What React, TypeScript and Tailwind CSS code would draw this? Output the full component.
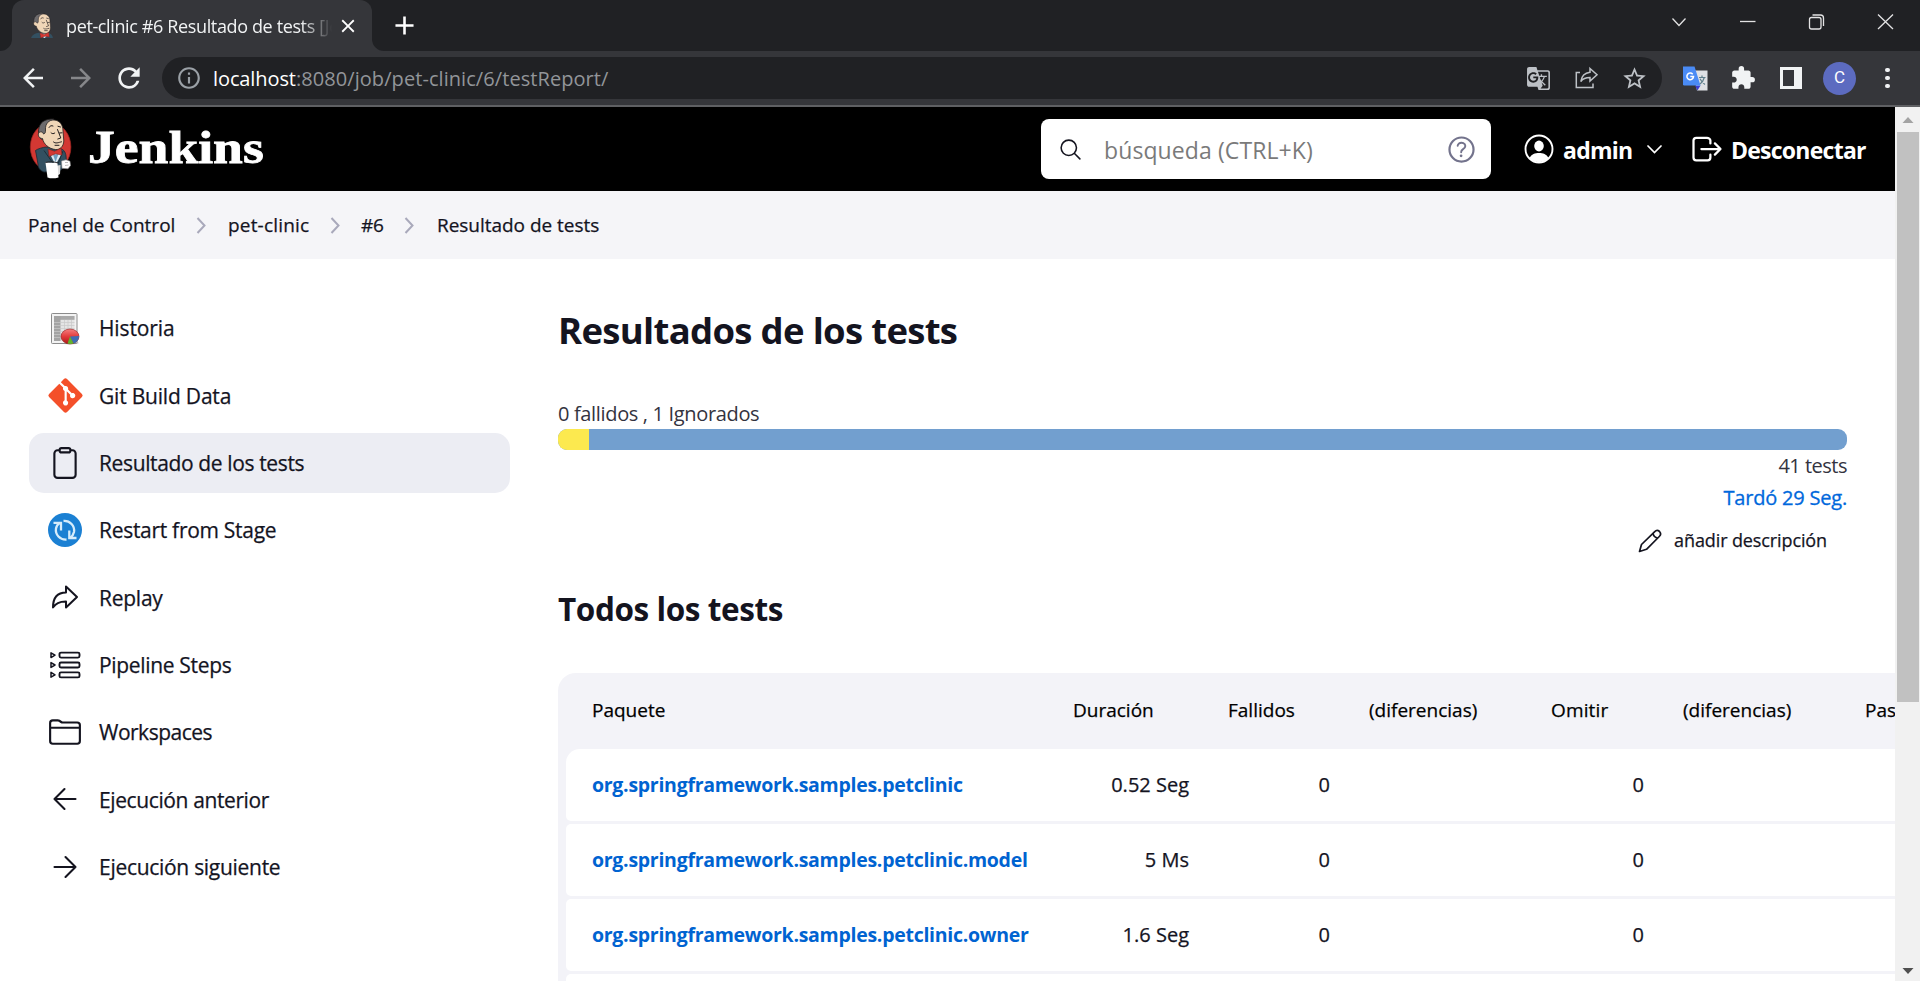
import type { ReactNode } from "react";
import {
  MdAdd,
  MdArrowBack,
  MdArrowForward,
  MdClose,
  MdExtension,
  MdGTranslate,
  MdInfoOutline,
  MdRefresh,
  MdStarBorder,
} from "react-icons/md";
import {
  IoArrowRedoOutline,
  IoClipboardOutline,
  IoFolderOutline,
  IoHelpCircleOutline,
  IoLogOutOutline,
  IoSearchOutline,
} from "react-icons/io5";
import { FaGitAlt } from "react-icons/fa";

function ButlerHead() {
  return (
    <g>
      <path d="M41 139 C37 134 38 125 43 121.500 C46 119.500 50 118.800 54 119 L50 130 L46 140 Z" fill="#6d6b6d" stroke="#231f20" strokeWidth="0.8" />
      <path
        d="M45.500 130 C45 123.500 49 119.800 54 120 C60 120.500 63 125 63 131 L63.800 141 C63.500 146.500 60 150 55.500 149.500 C49 149 43.500 144 42.500 138.500 C39.500 138.500 37.800 136 38.500 133.500 C39.500 131 43 131.500 43.500 134 C45.500 133.500 45.500 132 45.500 130 Z"
        fill="#f0d6b7"
        stroke="#231f20"
        strokeWidth="0.8"
      />
      <path
        d="M49 127.500 C50 125.600 51.500 125.300 53 126 M58 126.300 L60.500 127 M51 132.800 C52 134 53.800 134 54.800 133 M59.500 133 L62 132.800 M57.500 129.500 L60.800 138 L57.800 139 M53.500 142 C55.500 144 58.500 142.500 61.500 141.800 M55 145.300 L59 145.300"
        fill="none"
        stroke="#231f20"
        strokeWidth="1"
        strokeLinecap="round"
      />
    </g>
  );
}

function BowTie() {
  return (
    <path
      d="M48 149 L54.500 151.200 L61 148.200 L62 155 L55.500 153.800 L49 156.500 Z"
      fill="#d33833"
      stroke="#81201c"
      strokeWidth="0.6"
    />
  );
}

function JenkinsLogo() {
  return (
    <svg className="h-[62px] w-[44px] shrink-0" viewBox="29 118 44 62">
      <ellipse cx="50.600" cy="147" rx="20.300" ry="24" fill="#d33833" stroke="#9d2420" strokeWidth="0.7" />
      <path
        d="M35.500 150.500 C38 148.500 43 147.500 46 147 L60 148.500 C64 149.500 65.500 152 66 156 L66.500 163 L61 170 L44 172 C40 170.500 38 168 38 164 Z"
        fill="#335061"
        stroke="#1b2a33"
        strokeWidth="0.8"
      />
      <path d="M50 154 L55.500 165 L61.500 154 L55 152.500 Z" fill="#dce9f2" />
      <path d="M53 154.500 L55.500 162 L58.500 154 Z" fill="#6f9fc0" />
      <path d="M44 150.500 L53.500 164 M63 151 L58 164" stroke="#1b2a33" strokeWidth="0.9" fill="none" />
      <ButlerHead />
      <BowTie />
      <path d="M61.500 161 L66 159.800 L70 161.200 L70.500 165.500 L68 168.800 L62 168.300 Z" fill="#fff" stroke="#8d8d8d" strokeWidth="0.6" />
      <path d="M65 162.500 L68 162.500 M65 165.500 L68.500 165" stroke="#8d8d8d" strokeWidth="0.6" />
      <path d="M55 166 L60.500 165 L60 174 L56.500 176 Z" fill="#d9d9d9" />
      <path d="M45.500 162.500 L57.500 163 L58.500 177.500 C54 178.800 50 178.500 47.500 177.500 Z" fill="#fff" />
      <path d="M45.500 162.500 C49 161.500 54 161.500 58 163" stroke="#231f20" strokeWidth="0.9" fill="none" />
    </svg>
  );
}

function Favicon() {
  return (
    <svg className="h-[25px] w-[22px] shrink-0" viewBox="34.500 118.500 33 38" preserveAspectRatio="none">
      <path d="M34.500 157 C36 151 41 149.500 46 148.500 L60 148.500 C64 149.500 67 152.500 67.500 157 Z" fill="#335061" />
      <path d="M48 150 L54.500 157 L62 150 Z" fill="#dce9f2" />
      <ButlerHead />
      <BowTie />
    </svg>
  );
}

function WindowControls() {
  return (
    <svg className="h-[18px] w-[222px]" viewBox="1672 13 222 18" fill="none" stroke="#e3e3e4" strokeWidth="1.300">
      <path d="M1672.500 18.500 L1679 25.500 L1685.500 18.500" />
      <path d="M1740 21.500 H1755.500" />
      <rect x="1809.500" y="17.500" width="11.500" height="11.500" rx="2" />
      <path d="M1812.500 15 H1820.500 Q1823.500 15 1823.500 18 V26" />
      <path d="M1878 14.500 L1893 29 M1893 14.500 L1878 29" />
    </svg>
  );
}

function ShareIcon() {
  return (
    <svg className="h-[24px] w-[24px]" viewBox="0 0 24 24" fill="none" stroke="#bdc1c6" strokeWidth="1.500">
      <path d="M5 6.500 H1.300 V21.500 H18 V17.500" />
      <path d="M15 2.500 L22 8.800 L15 15 V11.600 C11 11.600 8 12.500 5.800 15.500 C6.500 10.500 9.500 7 15 6.300 Z" />
    </svg>
  );
}

function GoogleTranslateIcon() {
  return (
    <svg className="h-[25px] w-[25px]" viewBox="0 0 25 25">
      <path d="M10 4.500 H24.500 V24.500 H14 Z" fill="#dfe1e5" />
      <path d="M12 19.500 H17.500 L14.500 24.500 Z" fill="#3b3fd1" />
      <path d="M0 0.500 H11.500 L17.500 19.500 H1.200 Q0 19.500 0 18.300 Z" fill="#4a8bf5" />
      <path d="M16 11.500 H22.500 M19 9.500 V11.500 M21.300 11.500 C20.500 14.500 18.800 16.800 17 18 M17 12.800 C18.200 15.300 20 17.300 22 18.500" fill="none" stroke="#5f7f8c" strokeWidth="1.200" />
      <path d="M9.700 8.200 A3.300 3.300 0 1 0 10.500 10.600 H7.300" fill="none" stroke="#fff" strokeWidth="1.500" />
    </svg>
  );
}

function SidePanelIcon() {
  return (
    <svg className="h-[22px] w-[22px]" viewBox="0 0 22 22">
      <rect x="1.500" y="1.500" width="19" height="19" fill="none" stroke="#f1f3f4" strokeWidth="3" />
      <rect x="14" y="2" width="6" height="18" fill="#f1f3f4" />
    </svg>
  );
}

function ChromeTabs() {
  return (
    <div className="flex h-[51px] items-start bg-[#202124]">
      <div className="flex h-[51px] w-[12px] items-end bg-[#202124]">
        <svg className="h-[12px] w-[12px]" viewBox="0 0 12 12">
          <path d="M12 0 A12 12 0 0 1 0 12 H12 Z" fill="#35363a" />
        </svg>
      </div>
      <div className="flex h-[51px] w-[360px] items-center rounded-t-[12px] bg-[#35363a] pl-[19px]">
        <Favicon />
        <div className="ml-[13px] h-[26px] w-[266px] overflow-hidden whitespace-nowrap text-[18px] leading-[26px] tracking-[-0.37px] text-[#f1f3f4] [mask-image:linear-gradient(to_right,#000_235px,transparent_266px)]">
          pet-clinic #6 Resultado de tests [Jenkins]
        </div>
        <MdClose className="ml-[5px] text-[22px] text-white" />
      </div>
      <div className="flex h-[51px] w-[12px] items-end">
        <svg className="h-[12px] w-[12px]" viewBox="0 0 12 12">
          <path d="M0 0 A12 12 0 0 0 12 12 H0 Z" fill="#35363a" />
        </svg>
      </div>
      <MdAdd className="mt-[10px] ml-[5px] text-[31px] text-white" />
      <div className="mt-[13px] mr-[26px] ml-auto">
        <WindowControls />
      </div>
    </div>
  );
}

function ChromeToolbar() {
  return (
    <div className="flex h-[56px] items-center border-b-2 border-[#5f6063] bg-[#35363a]">
      <div className="flex w-[162px] items-center pl-[18px]">
        <MdArrowBack className="text-[30px] text-[#f1f3f4]" />
        <MdArrowForward className="ml-[18px] text-[30px] text-[#86878a]" />
        <MdRefresh className="ml-[17px] text-[32px] text-[#f1f3f4]" />
      </div>
      <div className="flex h-[42px] w-[1500px] items-center rounded-full bg-[#202124] pl-[14px]">
        <MdInfoOutline className="text-[26px] text-[#9aa0a6]" />
        <div className="mt-px ml-[11px] text-[20px] leading-[30px]">
          <span className="tracking-[-0.1px] text-white">localhost</span>
          <span className="tracking-[0.07px] text-[#929599]">:8080/job/pet-clinic/6/testReport/</span>
        </div>
        <div className="mr-[14px] ml-auto flex items-center">
          <MdGTranslate className="text-[25px] text-[#bdc1c6]" />
          <div className="ml-[24px]">
            <ShareIcon />
          </div>
          <MdStarBorder className="ml-[22px] text-[27px] text-[#bdc1c6]" />
        </div>
      </div>
      <div className="flex items-center pl-[21px]">
        <GoogleTranslateIcon />
        <MdExtension className="ml-[22px] text-[26px] text-[#f1f3f4]" />
        <div className="ml-[24px]">
          <SidePanelIcon />
        </div>
        <div className="ml-[21px] flex size-[33px] items-center justify-center rounded-full bg-[#5c6bc0] font-[Roboto] text-[17px] text-white">
          C
        </div>
        <div className="ml-[29px] flex flex-col gap-[3.5px]">
          <span className="size-[4.5px] rounded-full bg-[#f1f3f4]" />
          <span className="size-[4.5px] rounded-full bg-[#f1f3f4]" />
          <span className="size-[4.5px] rounded-full bg-[#f1f3f4]" />
        </div>
      </div>
    </div>
  );
}

function Header() {
  return (
    <header className="flex h-[84px] shrink-0 items-center bg-black pr-[29px] pl-[29px] text-white">
      <JenkinsLogo />
      <div className="ml-[15px] h-[62px] origin-left scale-x-[1.165] font-['Liberation_Serif'] text-[46px] leading-[60px] font-bold [-webkit-text-stroke:0.8px]">
        Jenkins
      </div>
      <div className="ml-auto flex h-[60px] w-[450px] items-center rounded-[8px] bg-white pr-[12px] pl-[17px]">
        <IoSearchOutline className="text-[25px] text-[#14141f]" />
        <span className="mt-px ml-[21px] text-[23px] leading-[32px] tracking-[0.1px] text-[#7a7a7a]">
          búsqueda (CTRL+K)
        </span>
        <IoHelpCircleOutline className="ml-auto text-[35px] text-[#73738c]" />
      </div>
      <svg className="ml-[33px] size-[30px]" viewBox="0 0 30 30">
        <circle cx="15" cy="15" r="13.500" fill="none" stroke="#fff" strokeWidth="1.900" />
        <ellipse cx="15" cy="12" rx="4.800" ry="5.400" fill="#fff" />
        <path d="M5.500 24 C7.500 20 11 19 15 19 C19 19 22.500 20 24.500 24 A13 13 0 0 1 5.500 24 Z" fill="#fff" />
      </svg>
      <span className="mt-px ml-[9px] w-[70px] text-[23px] leading-[32px] font-bold tracking-[-0.75px]">admin</span>
      <svg className="ml-[14px] h-[9px] w-[15px]" viewBox="0 0 15 9" fill="none" stroke="#fff" strokeWidth="1.700">
        <path d="M1 1 L7.500 7.500 L14 1" strokeLinecap="round" />
      </svg>
      <IoLogOutOutline className="ml-[27px] text-[36px]" />
      <span className="mt-px ml-[6px] w-[135px] text-[23px] leading-[32px] font-bold tracking-[-0.75px]">
        Desconectar
      </span>
    </header>
  );
}

function Crumb() {
  return (
    <svg className="h-[17px] w-[10px]" viewBox="0 0 10 17" fill="none" stroke="#a9a9bb" strokeWidth="2">
      <path d="M1.500 1 L8.500 8.500 L1.500 16" />
    </svg>
  );
}

function Breadcrumbs() {
  return (
    <div className="flex h-[68px] shrink-0 items-center bg-[#f5f5f8] pl-[28px] text-[19px] font-medium text-[#14141f] [-webkit-text-stroke:0.25px]">
      <span className="w-[168px] tracking-[0.02px]">Panel de Control</span>
      <Crumb />
      <span className="ml-[22px] w-[102px] tracking-[0.18px]">pet-clinic</span>
      <Crumb />
      <span className="ml-[21px] w-[43px] tracking-[-0.27px]">#6</span>
      <Crumb />
      <span className="ml-[23px] tracking-[-0.03px]">Resultado de tests</span>
    </div>
  );
}

function ReportIcon() {
  return (
    <svg className="h-[33px] w-[30px]" viewBox="0 0 30 33">
      <defs>
        <linearGradient id="pie" x1="0" y1="0" x2="0" y2="1">
          <stop offset="0" stopColor="#f58080" />
          <stop offset="0.500" stopColor="#e33b3b" />
          <stop offset="1" stopColor="#a81818" />
        </linearGradient>
      </defs>
      <ellipse cx="20" cy="31" rx="9" ry="1.500" fill="#d5d5d5" />
      <rect x="1.500" y="1.500" width="25.500" height="30" rx="0.800" fill="#f3f3f3" stroke="#8c8c8c" />
      <rect x="4" y="4" width="20.500" height="25" fill="#e4e4e4" />
      <rect x="4" y="4" width="20.500" height="3.800" fill="#a9a9a9" />
      <rect x="4" y="4" width="6.500" height="25" fill="#a3a3a3" />
      <path d="M4 10.500 H24.500 M4 13.500 H24.500 M4 16.500 H24.500 M4 19.500 H24.500 M4 22.500 H24.500 M4 25.500 H24.500 M14.500 8 V29 M18 8 V29 M21.500 8 V29" stroke="#c9c9c9" strokeWidth="0.700" />
      <ellipse cx="20" cy="24.500" rx="9" ry="7.500" fill="url(#pie)" stroke="#8f1d1d" strokeWidth="0.600" />
      <path d="M20 24.500 L29 24 C29 27.500 27 30.500 23.500 31.500 Z" fill="#3f6db3" />
      <path d="M20 24.500 L23.500 31.500 C21.500 32.200 19 32.100 17.500 31.500 Z" fill="#5fb52e" />
    </svg>
  );
}

function RestartIcon() {
  return (
    <svg className="size-[34px]" viewBox="0 0 34 34">
      <circle cx="17" cy="17" r="17" fill="#1b80d3" />
      <g fill="none" stroke="#d6ecfb" strokeWidth="2.300">
        <path d="M15.500 8 C22 7.500 27 13 26 19 C25.500 21.500 24 23.500 22 25" />
        <path d="M18.500 26.500 C12 27 7 21.500 8 15.500 C8.500 13 10 11 12 9.800" />
        <path d="M5.500 9.800 H13 V17.500" />
        <path d="M28.500 25 H21.300 V17.500" />
      </g>
    </svg>
  );
}

function StepsIcon() {
  return (
    <svg className="h-[28px] w-[32px]" viewBox="0 0 32 28" fill="none" stroke="#14141f" strokeWidth="1.900" strokeLinejoin="round">
      <path d="M2 1.800 V6.600 L6 4.200 Z M2 11.600 V16.400 L6 14 Z M2 21.400 V26.200 L6 23.800 Z" strokeWidth="1.500" />
      <rect x="10.500" y="1.600" width="20" height="5" rx="1.500" />
      <rect x="10.500" y="11.500" width="20" height="5" rx="1.500" />
      <rect x="10.500" y="21.400" width="20" height="5" rx="1.500" />
    </svg>
  );
}

function Arrow({ back = false }: { back?: boolean }) {
  return (
    <svg className="h-[24px] w-[26px]" viewBox="0 0 26 24" fill="none" stroke="#14141f" strokeWidth="2.100" strokeLinecap="round" strokeLinejoin="round">
      {back ? <path d="M12.500 2 L2.500 12 L12.500 22 M2.500 12 H23.500" /> : <path d="M13.500 2 L23.500 12 L13.500 22 M23.500 12 H2.500" />}
    </svg>
  );
}

const tasks: { label: string; tracking: string; icon: ReactNode; active?: boolean }[] = [
  { label: "Historia", tracking: "tracking-[-0.12px]", icon: <ReportIcon /> },
  { label: "Git Build Data", tracking: "tracking-[-0.2px]", icon: <FaGitAlt className="shrink-0 text-[39px] text-[#f4502a]" /> },
  { label: "Resultado de los tests", tracking: "tracking-[-0.37px]", icon: <IoClipboardOutline className="text-[36px]" />, active: true },
  { label: "Restart from Stage", tracking: "tracking-[-0.29px]", icon: <RestartIcon /> },
  { label: "Replay", tracking: "tracking-[-0.25px]", icon: <IoArrowRedoOutline className="text-[32px]" /> },
  { label: "Pipeline Steps", tracking: "tracking-[-0.33px]", icon: <StepsIcon /> },
  { label: "Workspaces", tracking: "tracking-[-0.5px]", icon: <IoFolderOutline className="text-[34px]" /> },
  { label: "Ejecución anterior", tracking: "tracking-[-0.39px]", icon: <Arrow back /> },
  { label: "Ejecución siguiente", tracking: "tracking-[-0.29px]", icon: <Arrow /> },
];

function Sidebar() {
  return (
    <nav className="flex w-[558px] shrink-0 flex-col gap-[7.35px] pt-[39px] pl-[29px] text-[#14141f]">
      {tasks.map((t) => (
        <a
          key={t.label}
          className={`flex h-[60px] w-[481px] shrink-0 items-center rounded-[15px] pl-[19px] ${t.active ? "bg-[#ecedf3]" : ""}`}
        >
          <span className="flex w-[34px] shrink-0 items-center justify-center">{t.icon}</span>
          <span className={`mt-[2px] ml-[17px] text-[21px] font-medium [-webkit-text-stroke:0.25px] ${t.tracking}`}>{t.label}</span>
        </a>
      ))}
    </nav>
  );
}

const rows = [
  { name: "org.springframework.samples.petclinic", duration: "0.52 Seg" },
  { name: "org.springframework.samples.petclinic.model", duration: "5 Ms" },
  { name: "org.springframework.samples.petclinic.owner", duration: "1.6 Seg" },
];

function TestTable() {
  return (
    <div className="mt-[43px] w-[1500px] rounded-tl-[18px] bg-[#f3f3f8] pl-2 text-[20px] font-medium text-[#14141f] [-webkit-text-stroke:0.25px]">
      <div className="grid h-[76px] grid-cols-[488px_155px_141px_182px_132px_182px_200px] items-center pb-px text-[19px] text-black">
        <span className="pl-[26px]">Paquete</span>
        <span className="pl-[19px]">Duración</span>
        <span className="pl-[19px]">Fallidos</span>
        <span className="pl-[19px]">(diferencias)</span>
        <span className="pl-[19px] tracking-[0.15px]">Omitir</span>
        <span className="pl-[19px]">(diferencias)</span>
        <span className="pl-[19px]">Pasados</span>
      </div>
      <div className="flex flex-col gap-[3px]">
        {rows.map((r, i) => (
          <div
            key={r.name}
            className={`grid h-[72px] grid-cols-[488px_155px_141px_182px_132px_182px_200px] items-center bg-white ${i === 0 ? "rounded-tl-[14px] rounded-bl-[5px]" : "rounded-l-[5px]"}`}
          >
            <a className="pl-[26px] text-[19.5px] font-bold tracking-[-0.28px] text-[#0063d1] [-webkit-text-stroke:0px]">{r.name}</a>
            <span className="pr-[20px] text-right">{r.duration}</span>
            <span className="pr-[20px] text-right">0</span>
            <span />
            <span className="pr-[20px] text-right">0</span>
            <span />
            <span />
          </div>
        ))}
        <div className="h-[72px] rounded-l-[5px] bg-white" />
      </div>
    </div>
  );
}

function Main() {
  return (
    <main className="flex min-w-0 flex-1 flex-col overflow-hidden text-[#14141f]">
      <h1 className="mt-[46px] h-[50px] text-[36.5px] leading-[50px] font-bold tracking-[-0.69px]">
        Resultados de los tests
      </h1>
      <div className="mr-[48px] flex flex-col text-[#333340]">
        <div className="mt-[44px] h-[30px] text-[20px] leading-[30px] tracking-[-0.34px]">0 fallidos , 1 Ignorados</div>
        <div className="flex h-[21px] overflow-hidden rounded-[9px] bg-[#729fcf]">
          <div className="w-[31px] bg-[#fce94f]" />
        </div>
        <div className="h-[32px] text-right text-[20px] leading-[32px] tracking-[-0.5px]">41 tests</div>
        <div className="h-[32px] text-right text-[20px] leading-[32px] font-medium tracking-[-0.2px] text-[#0068dc] [-webkit-text-stroke:0.3px]">
          Tardó 29 Seg.
        </div>
        <div className="flex h-[54px] items-center justify-end pr-[20px] pb-px text-[#14141f]">
          <svg className="size-[24px]" viewBox="0 0 24 24" fill="none" stroke="currentColor" strokeWidth="1.700" strokeLinejoin="round">
            <path d="M1.500 22.500 L3.500 15.500 L16.500 2.800 C18 1.300 20 1.200 21.500 2.500 C22.900 4 22.800 6 21.300 7.500 L8.500 20.300 Z" />
            <path d="M15 4.300 C15.500 7 17 8.500 19.700 9" />
          </svg>
          <span className="ml-[12px] text-[18px] font-medium tracking-[-0.11px] [-webkit-text-stroke:0.25px]">añadir descripción</span>
        </div>
      </div>
      <h2 className="mt-[20px] h-[42px] text-[31.5px] leading-[42px] font-bold tracking-[-0.42px]">Todos los tests</h2>
      <TestTable />
    </main>
  );
}

function Scrollbar() {
  return (
    <div className="flex w-[25px] shrink-0 flex-col items-center bg-[#f1f1f1]">
      <svg className="h-[25px] w-[12px] shrink-0" viewBox="0 0 12 25">
        <path d="M0.500 16 L6 10 L11.500 16 Z" fill="#a3a3a3" />
      </svg>
      <div className="h-[570px] w-[22px] bg-[#c1c1c1]" />
      <svg className="mt-auto h-[25px] w-[12px] shrink-0" viewBox="0 0 12 25">
        <path d="M0.500 12 L6 18 L11.500 12 Z" fill="#505050" />
      </svg>
    </div>
  );
}

export default function App() {
  return (
    <div className="flex h-[981px] w-[1920px] flex-col overflow-hidden bg-white font-['Open_Sans','Noto_Sans',sans-serif]">
      <ChromeTabs />
      <ChromeToolbar />
      <div className="flex h-[874px]">
        <div className="flex h-full w-[1895px] flex-col overflow-hidden">
          <Header />
          <Breadcrumbs />
          <div className="flex min-h-0 flex-1 overflow-hidden">
            <Sidebar />
            <Main />
          </div>
        </div>
        <Scrollbar />
      </div>
    </div>
  );
}
